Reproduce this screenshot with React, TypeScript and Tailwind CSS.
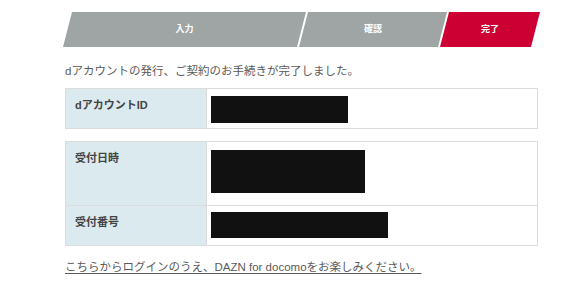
import React from "react";

const font = { fontFamily: '"Liberation Sans", "Noto Sans CJK JP", "Noto Sans", sans-serif' };

export default function App() {
  return (
    <div className="w-[577px] h-[290px] bg-white overflow-hidden" style={font}>
      <div className="pt-[12px] pl-[63px] flex">
        <div className="w-[243px] h-[35px] bg-[#9fa5a4] flex items-center justify-center text-white text-[9px] font-bold [clip-path:polygon(9px_0,100%_0,calc(100%-9px)_100%,0_100%)]">
          入力
        </div>
        <div className="ml-[-7px] w-[148px] h-[35px] bg-[#9fa5a4] flex items-center justify-center text-white text-[9px] font-bold [clip-path:polygon(9px_0,100%_0,calc(100%-9px)_100%,0_100%)]">
          確認
        </div>
        <div className="ml-[-7px] w-[100px] h-[35px] bg-[#cc0033] flex items-center justify-center text-white text-[9px] font-bold [clip-path:polygon(9px_0,100%_0,calc(100%-9px)_100%,0_100%)]">
          完了
        </div>
      </div>
      <div className="pl-[65px] w-[538px]">
        <p className="mt-[16px] text-[11.5px] leading-[17px] text-[#5a5a5a]">
          dアカウントの発行、ご契約のお手続きが完了しました。
        </p>
        <div className="mt-[8px] border border-[#dcdcdc] flex">
          <div className="w-[141px] bg-[#dbeaef] border-r border-[#dcdcdc] pl-[9px] pt-[8px] text-[11px] font-bold text-[#444]">
            dアカウントID
          </div>
          <div className="flex-1 pl-[4px] pt-[7px] pb-[5px]">
            <div className="w-[137px] h-[27px] bg-[#111]" />
          </div>
        </div>
        <div className="mt-[12px] border border-[#dcdcdc]">
          <div className="flex border-b border-[#dcdcdc]">
            <div className="w-[141px] bg-[#dbeaef] border-r border-[#dcdcdc] pl-[9px] pt-[8px] text-[11px] font-bold text-[#444]">
              受付日時
            </div>
            <div className="flex-1 pl-[4px] pt-[8px] pb-[12px]">
              <div className="w-[154px] h-[43px] bg-[#111]" />
            </div>
          </div>
          <div className="flex">
            <div className="w-[141px] bg-[#dbeaef] border-r border-[#dcdcdc] pl-[9px] pt-[8px] text-[11px] font-bold text-[#444]">
              受付番号
            </div>
            <div className="flex-1 pl-[4px] pt-[6px] pb-[7px]">
              <div className="w-[177px] h-[26px] bg-[#111]" />
            </div>
          </div>
        </div>
        <a href="#" className="block mt-[13px] text-[11.5px] leading-[17px] text-[#5a5a5a] underline underline-offset-2">
          こちらからログインのうえ、DAZN for docomoをお楽しみください。
        </a>
      </div>
    </div>
  );
}
